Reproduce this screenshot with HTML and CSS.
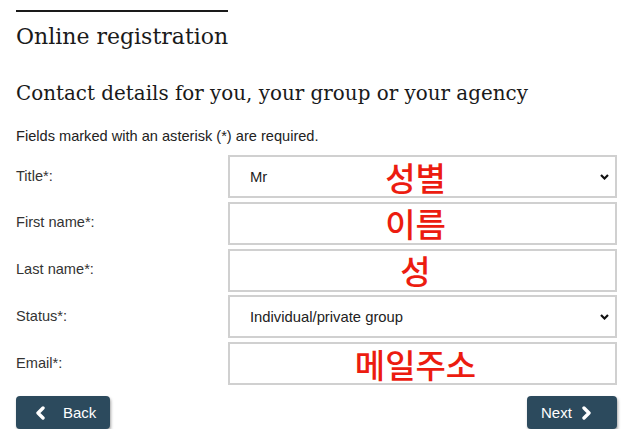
FILE: index.html
```html
<!DOCTYPE html>
<html lang="en">
<head>
    <meta charset="UTF-8">
    <meta name="viewport" content="width=device-width, initial-scale=1.0">
    <title>Online registration</title>
    <link rel="stylesheet" href="styles.css">
</head>
<body>

    <div class="container">
        <div class="top-rule"></div>
        <h1>Online registration</h1>
        <h2>Contact details for you, your group or your agency</h2>
        <p class="note">Fields marked with an asterisk (*) are required.</p>

        <form class="reg-form">
            <label class="field-label" for="title">Title*:</label>
            <div class="field">
                <select id="title" class="field-input">
                    <option>Mr</option>
                    <option>Mrs</option>
                    <option>Ms</option>
                </select>
                <span class="note-ko">성별</span>
            </div>

            <label class="field-label" for="first">First name*:</label>
            <div class="field">
                <input id="first" class="field-input" type="text">
                <span class="note-ko">이름</span>
            </div>

            <label class="field-label" for="last">Last name*:</label>
            <div class="field">
                <input id="last" class="field-input" type="text">
                <span class="note-ko">성</span>
            </div>

            <label class="field-label" for="status">Status*:</label>
            <div class="field">
                <select id="status" class="field-input">
                    <option>Individual/private group</option>
                    <option>Agency</option>
                </select>
            </div>

            <label class="field-label" for="email">Email*:</label>
            <div class="field">
                <input id="email" class="field-input" type="email">
                <span class="note-ko">메일주소</span>
            </div>
        </form>

        <div class="actions">
            <button class="nav-btn back-btn" type="button">
                <svg width="10" height="14" viewBox="0 0 10 14"><path d="M8 2 L3 7 L8 12" fill="none" stroke="#fff" stroke-width="3.4" stroke-linejoin="round" stroke-linecap="round"/></svg>
                <span>Back</span>
            </button>
            <button class="nav-btn next-btn" type="button">
                <span>Next</span>
                <svg width="10" height="14" viewBox="0 0 10 14"><path d="M2 2 L7 7 L2 12" fill="none" stroke="#fff" stroke-width="3.4" stroke-linejoin="round" stroke-linecap="round"/></svg>
            </button>
        </div>
    </div>

</body>
</html>
```

FILE: styles.css
```css
* {
    margin: 0;
    padding: 0;
    box-sizing: border-box;
}
body {
    font-family: "Liberation Sans", Arial, sans-serif;
    background-color: #ffffff;
    color: #222;
}
.container {
    width: 617px;
    padding: 10px 0 0 16px;
}
.top-rule {
    width: 212px;
    border-top: 2px solid #1a1a1a;
}
h1 {
    font-family: "DejaVu Serif", Georgia, serif;
    font-weight: normal;
    font-size: 22px;
    color: #1a1a1a;
    margin-top: 11px;
    line-height: 28px;
}
h2 {
    font-family: "DejaVu Serif", Georgia, serif;
    font-weight: normal;
    font-size: 19.9px;
    color: #1a1a1a;
    margin-top: 30px;
    line-height: 26px;
}
.note {
    font-size: 14.6px;
    line-height: 17px;
    margin-top: 21px;
    color: #222;
}
.reg-form {
    display: grid;
    grid-template-columns: 212px 389px;
    grid-auto-rows: 43px;
    row-gap: 3.75px;
    margin-top: 10px;
}
.field-label {
    font-size: 14.6px;
    color: #333;
    display: flex;
    align-items: center;
    padding-bottom: 2px;
}
.field {
    position: relative;
}
.field-input {
    width: 100%;
    height: 100%;
    border: 2px solid #d0d0d0;
    background-color: #fff;
    font-family: "Liberation Sans", Arial, sans-serif;
    font-size: 14.8px;
    color: #222;
    padding: 0 20px;
    outline: none;
}
select.field-input {
    appearance: none;
    background-image: url("data:image/svg+xml,%3Csvg xmlns='http://www.w3.org/2000/svg' width='9' height='6' viewBox='0 0 9 6'%3E%3Cpath d='M1 1 L4.5 4.5 L8 1' fill='none' stroke='%23111' stroke-width='2.2'/%3E%3C/svg%3E");
    background-repeat: no-repeat;
    background-position: right 6px center;
}
.note-ko {
    position: absolute;
    left: 0;
    right: 0;
    top: 50%;
    transform: translateY(-50%);
    margin-left: -14px;
    text-align: center;
    font-family: "Noto Sans CJK KR", sans-serif;
    font-weight: 500;
    font-size: 33px;
    line-height: 1;
    color: #ec1c10;
    pointer-events: none;
}
.actions {
    display: flex;
    justify-content: space-between;
    margin-top: 11px;
}
.nav-btn {
    height: 33px;
    background-color: #2c4a5d;
    color: #fff;
    border: none;
    border-radius: 4px;
    box-shadow: 1px 2px 3px rgba(0, 0, 0, 0.35);
    font-family: "Liberation Sans", Arial, sans-serif;
    font-size: 15px;
    display: flex;
    align-items: center;
    cursor: pointer;
}
.back-btn {
    width: 94px;
    padding-left: 19px;
    gap: 18px;
}
.next-btn {
    width: 90px;
    padding-left: 14px;
    gap: 10px;
}
```
